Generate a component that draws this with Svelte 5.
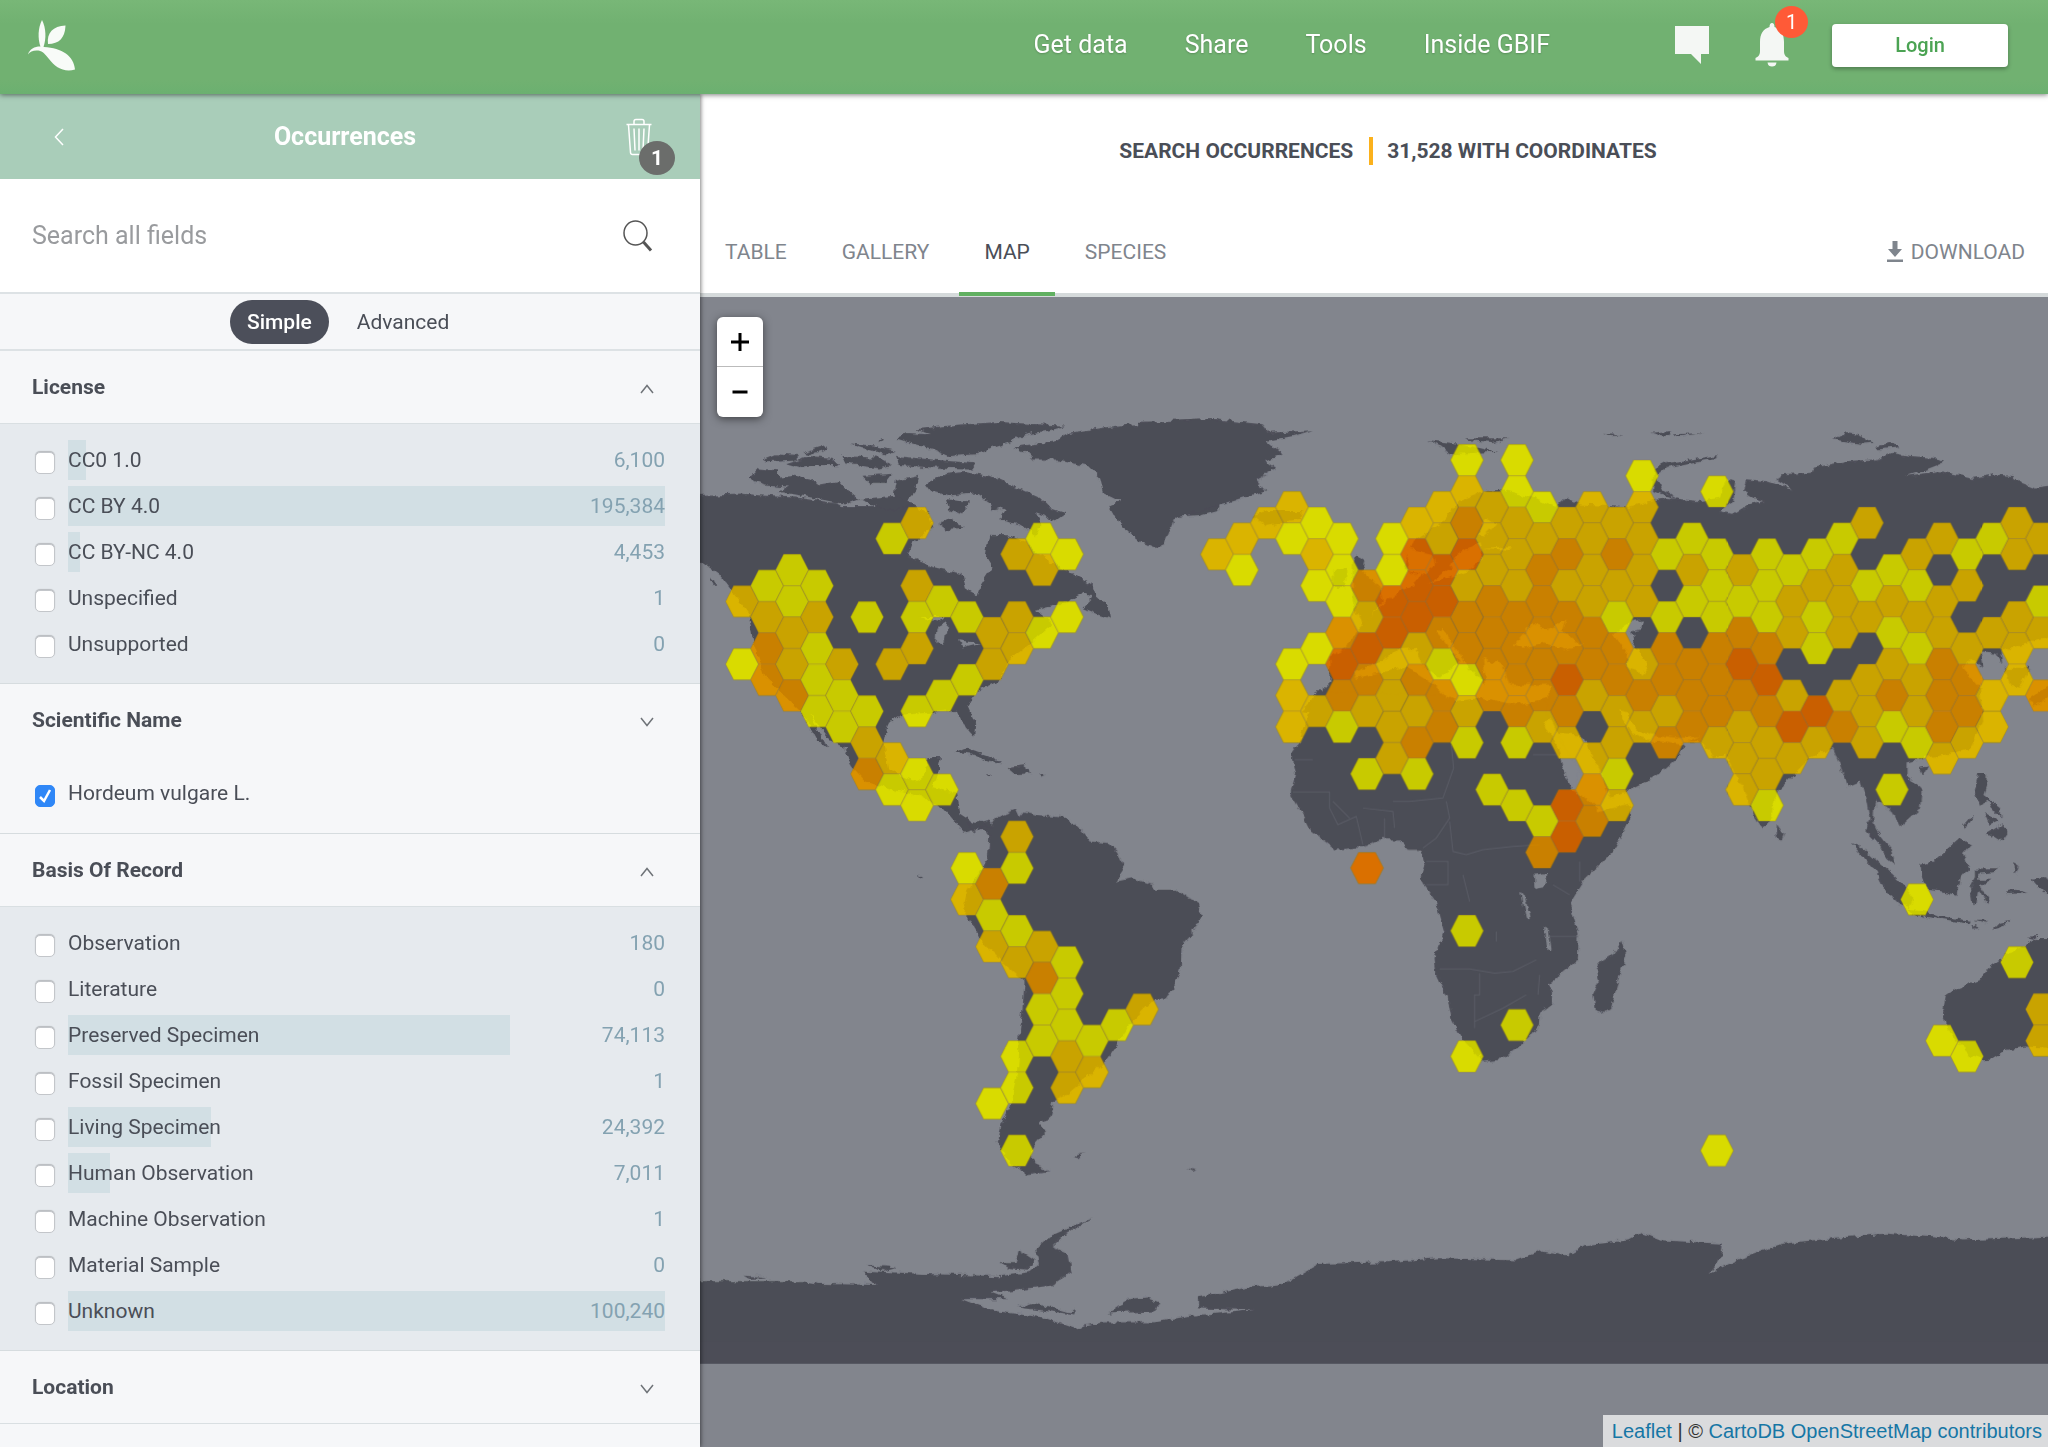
<script lang="ts">
    interface Facet {
        name: string;
        count: number;
        width: number;
    }

    const nav = ["Get data", "Share", "Tools", "Inside GBIF"];
    const tabs = ["Table", "Gallery", "Map", "Species"];

    // width is the bar length in percent
    const licenses: Facet[] = [
        { name: "CC0 1.0", count: 6100, width: 3 },
        { name: "CC BY 4.0", count: 195384, width: 100 },
        { name: "CC BY-NC 4.0", count: 4453, width: 2 },
        { name: "Unspecified", count: 1, width: 0 },
        { name: "Unsupported", count: 0, width: 0 },
    ];

    const basis: Facet[] = [
        { name: "Observation", count: 180, width: 0 },
        { name: "Literature", count: 0, width: 0 },
        { name: "Preserved Specimen", count: 74113, width: 74 },
        { name: "Fossil Specimen", count: 1, width: 0 },
        { name: "Living Specimen", count: 24392, width: 24 },
        { name: "Human Observation", count: 7011, width: 7 },
        { name: "Machine Observation", count: 1, width: 0 },
        { name: "Material Sample", count: 0, width: 0 },
        { name: "Unknown", count: 100240, width: 100 },
    ];

    // one string per hexagon column, west to east: half-row number + density class
    const columns = [
        "9g 13y",
        "8y 10g 12o 14o",
        "7y 9y 11g 13g 15o",
        "8y 10g 12y 14y 16y",
        "13g 15y 17y",
        "10y 16y 18g 20o",
        "5y 13g 19g 21y",
        "4g 8g 10y 12g 16y 20y 22y",
        "9y 15y 21y",
        "10y 14y 26y 28g",
        "11g 13g 27o 29y 31g 41y",
        "6g 10g 12g 24g 26y 30y 32g 38y 40y 44y",
        "5y 7g 11y 31g 33o 35y 37y",
        "6y 10y 32y 34y 36y 38g 40g",
        "37y 39g",
        "36y",
        "35g",
        "",
        "",
        "6g",
        "5g 7y",
        "4g",
        "3g 5y 13y 15g 17g",
        "4y 6g 8y 12y 16g",
        "5y 7y 9y 11o 13r 15o 17y",
        "8o 10g 12r 14o 16g 20y 26r",
        "5y 7y 9r 11r 13g 15g 17g 19g",
        "4g 6r 8r 10r 12g 14o 16g 18o 20y",
        "3g 5g 7r 9r 11o 13y 15o 17o",
        "0y 2g 4o 6r 8g 10o 12o 14y 16g 18y 30y 38y",
        "3g 5g 7g 9o 11o 13o 15o 21y",
        "0y 2y 4g 6g 8g 10o 12o 14o 16o 18y 22y 36y",
        "3y 5g 7o 9o 11o 13o 15o 17g 23y 25o",
        "4g 6o 8g 10o 12o 14r 16o 18g 22r 24r",
        "3g 5g 7g 9g 11o 13o 15g 19g 21o 23o",
        "4g 6o 8g 10y 12o 14o 16g 18g 20y 22g",
        "1y 3g 5g 7g 9g 13g 15o 17g",
        "6y 10y 12o 14o 16g 18o",
        "5y 7g 9y 13o 15o 17o",
        "2y 6y 8y 10y 12o 14o 16o 18g 44y",
        "7g 9y 11o 13r 15o 17g 19g 21g",
        "6y 8y 10y 12o 14r 16o 18g 20g 22y",
        "7y 9g 11g 15g 17r 19g",
        "6y 8g 10y 12y 16r 18g",
        "5y 7g 9g 11g 15g 17o",
        "4g 8y 10g 14g 16g 18g",
        "7y 9g 11y 13g 15o 17y 21y",
        "6g 8y 10g 12y 14g 16g 18y 28y",
        "5g 9g 11g 13o 15o 17o 19g 37y",
        "6y 8g 12g 14o 16o 18g 38y",
        "5y 11g 15g 17g",
        "4g 6g 10g 12g 14g 32y",
        "5g 9y 11g 15o 35g 37g",
    ];

    const hexes = columns.flatMap((column, i) =>
        column
            .split(" ")
            .filter(Boolean)
            .map((cell) => ({
                x: 743 + i * 24.98,
                y: 459 + parseInt(cell) * 15.68,
                level: cell.slice(-1),
            }))
    );
</script>

{#snippet chevron(open: boolean)}
    <svg class="chevron" viewBox="0 0 14 10" aria-hidden="true">
        <path d={open ? "M1 9 7 1.500 13 9" : "M1 1 7 8.500 13 1"} />
    </svg>
{/snippet}

{#snippet facetList(items: Facet[])}
    <ul class="facets">
        {#each items as item}
            <li>
                <label>
                    <input type="checkbox" />
                    <span class="facet">
                        <span class="bar" style:width="{item.width}%"></span>
                        <span class="name">{item.name}</span>
                        <span class="count">{item.count.toLocaleString("en-US")}</span>
                    </span>
                </label>
            </li>
        {/each}
    </ul>
{/snippet}

<div class="page">
    <header class="topbar">
        <a class="logo" href="/" aria-label="GBIF">
            <svg viewBox="0 0 48 51">
                <path d="M14 0C18 8 18.500 18 15.500 27L12.500 27C9.500 18 10 8 14 0Z" />
                <path d="M20 24C18.500 13 25 6 37.500 5.500C37 18 31 24 20 24Z" />
                <path d="M0 34.500C2 28 9 25.500 16 27C34 28 46 36 47 49.500C36 53 27 47 21 39C17 34 15 31.500 10.500 30.500C6 30 2 31 0 34.500Z" />
            </svg>
        </a>
        <nav>
            {#each nav as item}
                <a href="/">{item}</a>
            {/each}
        </nav>
        <button class="icon-button" aria-label="Feedback">
            <svg width="34" height="38" viewBox="0 0 34 38"><path d="M0 0H34V28H26V38L16 28H0Z" /></svg>
        </button>
        <button class="icon-button bell" aria-label="Notifications">
            <svg width="34" height="44" viewBox="0 0 34 44">
                <path d="M17 0C18.500 0 19.500 1.500 19.500 4C26 6 29 11 29 19V28C29 32 31 34 33.500 35V37.500H.5V35C3 34 5 32 5 28V19C5 11 8 6 14.500 4C14.500 1.500 15.500 0 17 0Z" />
                <path d="M12.500 39.500H21.500C21 42.500 19.500 43.500 17 43.500C14.500 43.500 13 42.500 12.500 39.500Z" />
            </svg>
            <span class="alert">1</span>
        </button>
        <button class="login">Login</button>
    </header>

    <div class="body">
        <aside class="sidebar">
            <div class="side-head">
                <button class="back" aria-label="Back">
                    <svg width="10" height="18" viewBox="0 0 10 18"><path d="M9 1 1.500 9 9 17" /></svg>
                </button>
                <h1>Occurrences</h1>
                <button class="trash" aria-label="Clear filters">
                    <svg width="26" height="38" viewBox="0 0 26 38">
                        <path d="M0.500 6.500H25.500M8 6V3.500Q8 1.500 10 1.500H16Q18 1.500 18 3.500V6M2.500 7 4.500 34.500Q4.700 36.500 6.500 36.500H19.500Q21.300 36.500 21.500 34.500L23.500 7M8 10.500 9 32.500M13 10.500V32.500M18 10.500 17 32.500" />
                    </svg>
                    <span class="applied">1</span>
                </button>
            </div>

            <div class="search">
                <input type="text" placeholder="Search all fields" aria-label="Search all fields" />
                <button aria-label="Search">
                    <svg width="30" height="32" viewBox="0 0 30 32">
                        <ellipse cx="12.500" cy="13" rx="11.500" ry="12" />
                        <path class="handle" d="M20.500 22 28 30.500" />
                    </svg>
                </button>
            </div>

            <div class="modes">
                <button class="active">Simple</button>
                <button>Advanced</button>
            </div>

            <section>
                <h2><button>License {@render chevron(true)}</button></h2>
                {@render facetList(licenses)}
            </section>

            <section>
                <h2 class="plain"><button>Scientific Name {@render chevron(false)}</button></h2>
                <ul class="facets selected">
                    <li>
                        <label>
                            <input type="checkbox" checked />
                            <span class="facet"><span class="name">Hordeum vulgare L.</span></span>
                        </label>
                    </li>
                </ul>
            </section>

            <section>
                <h2><button>Basis Of Record {@render chevron(true)}</button></h2>
                {@render facetList(basis)}
            </section>

            <section>
                <h2><button>Location {@render chevron(false)}</button></h2>
            </section>
        </aside>

        <main>
            <div class="title">
                <span>Search occurrences</span>
                <span class="with">31,528 with coordinates</span>
            </div>

            <div class="tabs">
                {#each tabs as tab}
                    <a href="/" class:active={tab === "Map"}>{tab}</a>
                {/each}
                <a class="download" href="/">
                    <svg width="16" height="22" viewBox="0 0 16 22">
                        <path d="M5.500 0H10.500V8H15L8 16 1 8H5.500ZM0 18.500H16V21H0Z" />
                    </svg>
                    Download
                </a>
            </div>

            <div class="map">
                <svg class="world" viewBox="701 296 1347 1150" preserveAspectRatio="xMinYMin slice" aria-label="Occurrence map">
                    <defs>
                        <polygon id="hex" points="-16.400,0 -8.400,-15.680 8.400,-15.680 16.400,0 8.400,15.680 -8.400,15.680" />
                        <filter id="coast" x="0" y="0" width="100%" height="100%">
                            <feTurbulence type="fractalNoise" baseFrequency="0.12" numOctaves="3" seed="4" />
                            <feDisplacementMap in="SourceGraphic" scale="7" xChannelSelector="R" yChannelSelector="G" />
                        </filter>
                    </defs>

                    <g class="land" filter="url(#coast)">
                        <!-- North America and the Arctic islands -->
                        <g transform="translate(700 280) scale(.3333 .3571)">
                            <path d="M-30 600 130 595 180 600 300 607 410 622 430 630 560 630 640 625 690 650 700 690 640 730 625 770 700 800 790 820 800 860 835 880 845 850 880 800 860 770 870 710 930 712 980 730 1010 760 1100 810 1180 850 1190 880 1230 915 1235 945 1200 935 1150 915 1180 885 1150 875 1100 900 1010 920 1060 960 1000 1010 930 1060 900 1120 830 1150 805 1190 828 1240 825 1275 800 1250 775 1200 700 1205 620 1210 570 1230 555 1290 570 1370 650 1400 680 1380 685 1335 725 1335 715 1375 700 1420 770 1430 780 1490 830 1520 870 1510 890 1570 850 1530 800 1545 740 1480 660 1440 560 1420 500 1400 460 1360 440 1310 400 1290 330 1210 385 1305 350 1280 310 1210 200 1110 160 1000 150 930 100 870 60 820 -30 760Z" />
                            <path d="M150 555 180 525 240 530 240 550 290 545 340 555 360 570 420 560 440 580 480 610 440 625 330 605 240 590 270 575 200 570ZM190 500 230 485 300 490 290 500 200 505ZM260 510 330 490 400 495 420 515 350 515 300 520ZM310 480 380 460 385 470 330 485ZM455 455 520 460 590 475 560 485 480 465ZM430 490 540 495 580 515 540 525 440 510Z" />
                            <path d="M590 440 620 425 700 430 650 415 780 402 900 395 1100 405 1050 418 980 430 930 450 880 465 830 485 750 490 700 470 640 455ZM590 490 700 500 830 510 820 525 700 522 600 515ZM490 545 580 540 560 565 510 565ZM590 560 660 545 650 590 610 630 585 590Z" />
                            <path d="M680 565 740 540 800 535 870 545 960 580 1020 605 1050 635 1100 650 1070 670 1010 650 1030 680 1010 710 960 680 900 670 920 640 870 620 830 595 750 600 700 590ZM740 610 810 620 790 650 750 640ZM720 680 750 665 800 690 740 695ZM480 610 600 600 640 630 560 640ZM870 625 900 620 905 635 880 640ZM540 440 555 445 535 450Z" />
                            <path d="M940 465 1060 450 1110 425 1250 405 1500 388 1560 388V640L1500 655 1420 660 1395 700 1375 745 1320 725 1260 680 1230 630 1265 615 1210 590 1200 550 1160 515 1080 500 1000 500 980 480Z" />
                            <path d="M765 1320 800 1305 860 1325 915 1352 870 1345 820 1325ZM925 1360 970 1355 1000 1378 950 1380ZM1020 1378 1042 1380 1030 1387ZM860 1380 882 1383 870 1388ZM30 830 60 850 40 850Z" />
                        </g>

                        <!-- Greenland, Iceland, Svalbard, Britain -->
                        <g transform="translate(1150 400) scale(.3333)">
                            <path d="M-30 62 200 55 340 70 360 95 490 88 430 105 350 120 400 160 350 180 380 200 320 235 350 268 250 300 190 315 80 350 40 430 10 438-30 420Z" />
                            <path d="M310 345 360 330 460 330 455 355 400 365 350 375ZM840 118 940 130 1040 152 980 155 900 160 870 135ZM950 112 1080 112 1030 123 960 118ZM610 480 620 460 648 480 640 510 690 560 700 600 640 680 610 600ZM550 510 590 500 590 560 550 560Z" />
                        </g>

                        <!-- Eurasia -->
                        <g transform="translate(1600 400) scale(.3333)">
                            <path d="M1400 250 1310 262 1265 245 1240 225 1180 220 1120 230 1020 210 915 225 980 205 1030 185 1000 170 930 165 880 155 830 175 740 180 640 200 630 215 540 220 530 235 580 265 500 240 440 235 430 270 460 290 490 300 430 320 400 338 360 330 400 300 410 240 380 230 360 290 300 300 200 290 150 300 90 320 30 315-60 310-100 290-130 320-200 290-290 265-340 270-420 300-480 370-560 420-590 500-550 520-510 500-560 550-620 580-680 640-720 680-760 740-810 770-810 850-900 930-60 1000 0 1100 30 1190 80 1170 150 1135 195 1105 240 1065 250 1020 310 1020 340 1070 380 1060 400 1110 430 1160 460 1240 490 1285 510 1260 530 1170 580 1120 630 1070 700 1040 720 1090 745 1155 780 1140 800 1190 812 1250 800 1290 850 1340 840 1310 820 1260 825 1200 870 1220 900 1275 960 1220 965 1170 920 1120 920 1080 970 1070 1040 1060 1110 1040 1150 960 1140 860 1090 800 1110 770 1150 800 1140 750 1190 755 1210 790 1205 750 1290 720 1400 690Z" />
                            <path d="M165 205 200 185 260 178 350 163 350 172 270 185 200 200 170 225 185 265 235 295 160 270ZM700 115 740 93 780 100 820 125 780 128ZM825 138 870 125 900 138 840 145ZM10 98 70 103 30 106ZM155 95 210 90 200 108ZM220 100 310 96 240 106ZM955 1100 985 1095 970 1120ZM528 1265 552 1300 545 1318 528 1312ZM1215 800 1290 800 1260 860 1230 850ZM1290 890 1350 850 1350 880 1300 920Z" />
                        </g>

                        <!-- South America -->
                        <g transform="translate(700 780) scale(.3827 .3333)">
                            <path d="M700 130 735 120 758 140 775 110 825 85 835 110 850 90 880 100 960 110 1000 150 1020 180 1070 185 1095 215 1110 265 1090 300 1130 290 1185 310 1190 325 1245 325 1300 365 1313 400 1295 445 1260 490 1258 560 1240 615 1220 650 1190 652 1130 720 1090 790 1060 840 1000 900 960 940 925 960 915 1010 885 1020 907 1050 880 1085 865 1120 880 1150 915 1168 860 1178 815 1150 780 1080 790 1030 810 980 830 880 835 780 845 680 850 600 790 540 740 480 690 380 700 330 740 260 755 220 758 165 740 135 715 155ZM975 1125 1005 1115 990 1130ZM1275 1160 1298 1166 1290 1170ZM572 283 582 290 576 297Z" />
                        </g>

                        <!-- Africa and Madagascar -->
                        <g transform="translate(1250 700) scale(.3333)">
                            <path d="M200-30 150 125 125 160 137 215 122 280 150 325 180 385 260 445 340 437 400 413 445 415 475 445 515 445 525 490 512 535 560 600 585 690 555 770 560 815 595 890 605 950 640 1015 700 1078 760 1070 830 1015 868 970 870 935 910 910 910 870 897 848 985 775 987 700 960 605 1000 540 1090 450 1145 340 1140 310 1050 330 1010 290 965 265 945 220 935 170 900 60 880-10Z" />
                            <path d="M1118 718 1130 760 1110 820 1085 920 1060 935 1035 925 1028 880 1045 840 1038 800 1055 780 1095 755Z" />
                        </g>

                        <!-- South-east Asia and Australia -->
                        <g transform="translate(1650 760) scale(.3333)">
                            <path d="M985 35 1010 35 1010 70 1000 100 1020 115 990 130 975 85ZM1010 110 1050 140 1055 165 1030 150ZM1005 155 1045 180 1020 192ZM1010 215 1060 185 1073 215 1055 240 1030 225ZM940 195 970 160 968 172 945 202ZM655 180 670 190 700 230 725 260 735 310 710 290 680 240 650 205ZM607 248 640 262 690 305 730 340 765 375 790 410 780 440 745 425 700 380 670 320Z" />
                            <path d="M812 310 850 300 900 255 930 228 960 250 940 275 955 320 930 350 920 400 880 390 835 385 815 345ZM765 445 830 450 880 465 960 478 955 486 890 475 800 462ZM975 478 1010 478 1005 486ZM1030 505 1050 485 1080 478 1050 500ZM960 488 990 500 975 502ZM975 325 1045 323 1050 312 1038 332 985 337 985 355 1025 355 990 375 1020 425 1005 418 985 385 980 428 968 428 960 380 975 350ZM1090 305 1107 315 1095 338ZM1068 390 1100 385 1135 395 1075 398ZM1145 355 1185 350 1230 370V420L1165 380Z" />
                            <path d="M1230 530 1160 530 1130 545 1060 590 1015 620 990 655 920 680 885 705 878 740 890 790 920 840 960 880 1000 893 1030 890 1070 865 1130 855 1230 860ZM1128 526 1165 524 1150 532Z" />
                        </g>

                        <!-- Antarctica -->
                        <g transform="translate(700 1180) scale(.8597 .335)">
                            <path d="M-20 297 120 297 140 305 205 308 190 265 260 275 350 282 385 270 395 250 392 200 410 160 460 105 424 160 410 195 428 215 432 270 410 310 340 330 360 350 305 350 340 385 400 405 438 438 470 420 530 420 570 400 645 383 580 378 580 345 640 315 680 305 720 245 800 240 860 228 950 235 980 205 1010 220 1030 190 1080 175 1097 152 1120 175 1190 185 1188 225 1175 272 1210 230 1260 185 1320 168 1380 155 1430 165 1470 175 1600 160V520H-20ZM475 393 500 350 520 345 535 360 530 387ZM350 240 368 240 372 205 390 235 382 262 360 258ZM370 375 390 360 430 390 438 380 436 396 400 385ZM195 250 230 255 215 265ZM50 280 80 285 60 290Z" />
                        </g>
                    </g>
                    <rect class="land" x="690" y="1340" width="1370" height="22" />

                    <g class="sea" filter="url(#coast)">
                        <g transform="translate(1150 400) scale(.3333)">
                            <path d="M610 810 700 780 740 745 800 740 820 790 870 830 930 780 860 690 880 680 950 790 1010 850 1000 770 1060 790 1080 850 1200 850 1200 890 1100 910 1000 890 920 900 880 880 840 840 770 795 700 815 620 830ZM1095 730 1150 665 1190 680 1250 655 1240 690 1300 735 1250 745 1180 725 1120 740ZM1182 960 1202 955 1240 1030 1290 1100 1275 1165 1240 1100 1225 1040ZM770 440 850 460 860 490 820 520 780 510ZM840 545 900 500 920 460 990 420 1000 470 960 510ZM985 400 1010 350 1040 370 1000 410ZM1000 440 1090 435 1080 447Z" />
                        </g>
                        <g transform="translate(1600 400) scale(.3333)">
                            <path d="M40 700 90 660 130 655 125 685 95 690 100 720 120 750 145 790 130 820 80 800 85 760 60 730ZM55 930 85 935 110 985 160 1000 240 1010 300 1005 240 1030 180 1020 150 1020 100 1000Z" />
                        </g>
                        <g transform="translate(700 280) scale(.3333 .3571)">
                            <path d="M715 970 745 955 735 1020 712 1010ZM780 1005 845 1015 790 1028ZM660 940 740 940 720 955Z" />
                        </g>
                        <g transform="translate(1250 700) scale(.3333)">
                            <path d="M852 520 890 515 885 555 855 560ZM815 575 825 580 842 658 832 652ZM886 675 894 680 903 748 893 742Z" />
                        </g>
                    </g>

                    <g class="borders" transform="translate(1250 700) scale(.3333)">
                        <path d="M135 175H190M130 272H240V320L265 370 320 345 340 430M250 300 300 350M340 320 430 330 435 380M405 350V410M430 300H480L580 290 612 200 605 130M590 300 600 350 560 410 520 440M600 360 610 450 650 460M530 480H595V550H530M650 460 700 445 790 435 870 430M570 802H660L735 815M690 815V880H675V980M675 960 760 920 830 880M735 815 790 810 860 775M870 820 865 880M740 690V720M900 705H985M640 520 660 600M850 160H930M910 550 960 580M990 540V480" />
                    </g>

                    <!-- drops the blue of the basemap so the densities stay saturated -->
                    <g class="tint">
                        {#each hexes as hex}
                            <use href="#hex" x={hex.x} y={hex.y} />
                        {/each}
                    </g>
                    <g class="hexes">
                        {#each hexes as hex}
                            <use href="#hex" x={hex.x} y={hex.y} class={hex.level} />
                        {/each}
                    </g>
                </svg>

                <div class="zoom">
                    <button aria-label="Zoom in">
                        <svg width="18" height="18" viewBox="0 0 18 18"><path d="M0 9H18M9 0V18" /></svg>
                    </button>
                    <button aria-label="Zoom out">
                        <svg width="18" height="18" viewBox="0 0 18 18"><path d="M1.500 9H16.500" /></svg>
                    </button>
                </div>

                <div class="attribution">
                    <a href="/">Leaflet</a> | © <a href="/">CartoDB</a> <a href="/">OpenStreetMap contributors</a>
                </div>
            </div>
        </main>
    </div>
</div>

<style>
    :global(body) {
        margin: 0;
    }
    .page {
        display: flex;
        flex-direction: column;
        min-height: 100vh;
        font-family: Roboto, sans-serif;
        font-size: 21px;
        line-height: 24px;
        color: #4a4e57;
    }
    button {
        margin: 0;
        padding: 0;
        border: 0;
        background: none;
        font: inherit;
        color: inherit;
    }
    a {
        color: inherit;
        text-decoration: none;
    }
    svg {
        display: block;
    }
    ul {
        list-style: none;
        margin: 0;
    }

    .topbar {
        position: relative;
        z-index: 3;
        display: flex;
        align-items: center;
        box-sizing: border-box;
        height: 94px;
        padding: 0 40px 4px 28px;
        background: linear-gradient(#78b777, #71b171 24px, #71b171 80px, #6bb070);
        box-shadow: 0 1px 5px rgba(0, 0, 0, 0.5);
        color: #fff;
    }
    .logo {
        margin-right: auto;
    }
    .logo svg {
        width: 48px;
        height: 51px;
        fill: #f8fbf8;
    }
    nav {
        display: flex;
        gap: 57px;
        margin-right: 125px;
        font-size: 25px;
        text-shadow: 0 1px 2px rgba(0, 0, 0, 0.2);
    }
    .icon-button {
        position: relative;
        margin-right: 46px;
    }
    .icon-button svg {
        fill: #f4f7f4;
    }
    .icon-button.bell {
        margin-right: 43px;
    }
    .alert {
        position: absolute;
        top: -17px;
        right: -19px;
        width: 33px;
        border-radius: 50%;
        background: #ff5a37;
        font-size: 20px;
        line-height: 32px;
        text-align: center;
    }
    .login {
        width: 176px;
        height: 43px;
        border-radius: 4px;
        background: #fff;
        box-shadow: 0 2px 4px rgba(0, 0, 0, 0.3);
        color: #4ba353;
        font-size: 20px;
        font-weight: 500;
    }

    .body {
        display: grid;
        grid-template-columns: 700px 1fr;
        flex: 1;
    }
    .sidebar {
        position: relative;
        z-index: 2;
        background: #f6f7f9;
        box-shadow: 1px 0 4px rgba(0, 0, 0, 0.5);
    }
    .side-head {
        display: flex;
        align-items: center;
        justify-content: space-between;
        box-sizing: border-box;
        height: 85px;
        padding: 0 48px 0 54px;
        background: #a9cdb9;
        color: #fff;
    }
    .side-head svg {
        fill: none;
        stroke: #fff;
        stroke-width: 1.5;
    }
    h1 {
        margin: 0;
        font-size: 25px;
    }
    .trash {
        position: relative;
    }
    .applied {
        position: absolute;
        top: 23px;
        left: 13px;
        width: 36px;
        border-radius: 50%;
        background: #6b6d6b;
        font-size: 21px;
        font-weight: 700;
        line-height: 34px;
        text-align: center;
    }
    .search {
        display: flex;
        align-items: center;
        height: 113px;
        padding: 0 47px 0 32px;
        background: #fff;
        border-bottom: 2px solid #dde2e5;
    }
    .search input {
        flex: 1;
        min-width: 0;
        padding: 0;
        border: 0;
        outline: 0;
        font: inherit;
        font-size: 25px;
    }
    .search input::placeholder {
        color: #999b9e;
    }
    .search svg {
        fill: none;
        stroke: #555;
        stroke-width: 1.5;
    }
    .search .handle {
        stroke-width: 3;
    }
    .modes {
        display: flex;
        align-items: center;
        gap: 11px;
        height: 55px;
        padding-left: 230px;
        border-bottom: 2px solid #dde2e5;
    }
    .modes button {
        height: 44px;
        padding: 0 17px;
        border-radius: 22px;
    }
    .modes .active {
        background: #4c4f5a;
        color: #fff;
        font-weight: 500;
    }

    h2 {
        margin: 0;
        border-bottom: 1px solid #d9dfe2;
        font-size: 21px;
    }
    h2.plain {
        border-bottom: 0;
    }
    h2 button {
        display: flex;
        align-items: center;
        justify-content: space-between;
        width: 100%;
        height: 72px;
        padding: 0 46px 0 32px;
    }
    .chevron {
        width: 14px;
        height: 10px;
        margin-top: 4px;
        fill: none;
        stroke: #6f7378;
        stroke-width: 1.5;
    }
    .facets {
        display: flex;
        flex-direction: column;
        gap: 6px;
        padding: 16px 35px 19px;
        border-bottom: 1px solid #d6dcdf;
        background: #e6eaee;
    }
    .facets.selected {
        padding: 17px 35px 20px;
        background: none;
    }
    .facets label {
        display: flex;
        align-items: center;
        gap: 13px;
    }
    .facets input {
        appearance: none;
        flex: none;
        width: 20px;
        height: 22px;
        margin: 5px 0 0;
        border: 1px solid #c3c6ca;
        border-radius: 5px;
        background: #fff;
        box-shadow: 0 -1px 1px rgba(0, 0, 0, 0.2);
    }
    .facets input:checked {
        border-color: #2f87f7;
        background: #2f87f7 url("data:image/svg+xml,%3Csvg xmlns='http://www.w3.org/2000/svg' viewBox='0 0 20 22'%3E%3Cpath d='M5 12l4 4 6-11' fill='none' stroke='white' stroke-width='2.500'/%3E%3C/svg%3E") center / 20px 22px;
        box-shadow: none;
    }
    .facet {
        position: relative;
        display: flex;
        align-items: center;
        justify-content: space-between;
        flex: 1;
        height: 40px;
    }
    .bar {
        position: absolute;
        inset: 0 auto 0 0;
        background: #d2dfe4;
    }
    .name,
    .count {
        position: relative;
    }
    .count {
        color: #84a2b1;
    }

    main {
        display: flex;
        flex-direction: column;
        min-width: 0;
        background: #fff;
    }
    .title {
        display: flex;
        align-items: center;
        justify-content: center;
        height: 113px;
        padding-left: 28px;
        font-weight: 700;
        text-transform: uppercase;
    }
    .with {
        margin-left: 16px;
        padding-left: 14px;
        border-left: 4px solid #fbb11c;
        line-height: 28px;
    }
    .tabs {
        display: flex;
        gap: 5px;
        height: 86px;
        border-bottom: 4px solid #d5dadb;
        color: #7f858d;
        text-transform: uppercase;
    }
    .tabs a {
        padding: 0 25px;
        line-height: 90px;
    }
    .tabs .active {
        margin-bottom: -3px;
        border-bottom: 4px solid #61b061;
        color: #4a4e57;
    }
    .tabs .download {
        display: flex;
        align-items: center;
        gap: 8px;
        margin-left: auto;
        padding: 4px 23px 0 0;
        line-height: 24px;
    }
    .download svg {
        fill: #7f858d;
    }

    .map {
        position: relative;
        flex: 1;
        overflow: hidden;
        background: #82858d;
    }
    .world {
        position: absolute;
        inset: 0;
        width: 100%;
        height: 100%;
    }
    .land {
        fill: #4c4d57;
    }
    .sea {
        fill: #82858d;
    }
    .borders {
        fill: none;
        stroke: #5b5d67;
        stroke-width: 3;
    }
    .tint {
        fill: #ff0;
        mix-blend-mode: multiply;
    }
    .hexes {
        stroke: #967c46;
        stroke-opacity: 0.3;
        stroke-width: 1;
        fill-opacity: 0.7;
    }
    .y {
        fill: #feff00;
    }
    .g {
        fill: #ffc800;
    }
    .o {
        fill: #ff9600;
    }
    .r {
        fill: #ff6600;
    }
    .zoom {
        position: absolute;
        top: 20px;
        left: 17px;
        width: 46px;
        border-radius: 6px;
        background: #fff;
        box-shadow: 0 2px 8px rgba(0, 0, 0, 0.5);
    }
    .zoom button {
        display: grid;
        place-items: center;
        width: 100%;
        height: 49px;
    }
    .zoom button + button {
        border-top: 1px solid #bbb;
        height: 51px;
    }
    .zoom svg {
        stroke: #000;
        stroke-width: 3;
    }
    .attribution {
        position: absolute;
        right: 0;
        bottom: 0;
        padding: 4px 6px 4px 9px;
        background: rgba(255, 255, 255, 0.7);
        font-family: "Liberation Sans", Arial, sans-serif;
        font-size: 20px;
        color: #333;
    }
    .attribution a {
        color: #1676a5;
    }
</style>
